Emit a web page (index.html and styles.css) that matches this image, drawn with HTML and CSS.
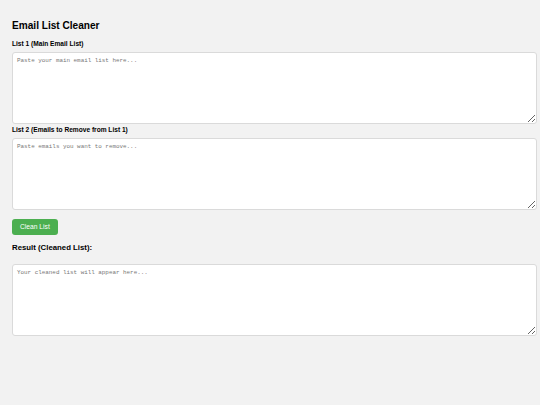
FILE: index.html
```html
<!DOCTYPE html>
<html lang="en">
<head>
<meta charset="utf-8">
<title>Email List Cleaner</title>
<link rel="stylesheet" href="styles.css">
</head>
<body>
<main class="page">
  <h1 class="title">Email List Cleaner</h1>
  <label class="field-label" for="list1">List 1 (Main Email List)</label>
  <textarea id="list1" class="box" placeholder="Paste your main email list here..."></textarea>
  <label class="field-label" for="list2">List 2 (Emails to Remove from List 1)</label>
  <textarea id="list2" class="box" placeholder="Paste emails you want to remove..."></textarea>
  <button class="btn" type="button">Clean List</button>
  <h3 class="result-title">Result (Cleaned List):</h3>
  <textarea id="result" class="box" placeholder="Your cleaned list will appear here..." readonly></textarea>
</main>
</body>
</html>
```

FILE: styles.css
```css
html, body {
  margin: 0;
  padding: 0;
  background: #f2f2f2;
}

body {
  font-family: "Liberation Sans", Arial, Helvetica, sans-serif;
  color: #000;
}

.page {
  display: flex;
  flex-direction: column;
  align-items: flex-start;
  padding: 20px 3px 0 12px;
}

.title {
  margin: 0 0 8px 0;
  font-size: 10.1px;
  line-height: 12px;
  font-weight: bold;
}

.field-label {
  display: block;
  font-size: 6.6px;
  line-height: 8px;
  font-weight: bold;
  margin: 0 0 4px 0;
}

.box {
  display: block;
  width: 100%;
  height: 72px;
  box-sizing: border-box;
  margin: 0 0 2px 0;
  padding: 4px;
  border: 1px solid #dadada;
  border-radius: 3px;
  background: #fff;
  font-family: "Liberation Mono", "DejaVu Sans Mono", monospace;
  font-size: 5.9px;
  color: #333;
}

.box::placeholder {
  color: #777;
}

.btn {
  margin: 7px 0 0 0;
  height: 16px;
  padding: 0 8px;
  border: none;
  border-radius: 3px;
  background: #4caf50;
  color: #fff;
  font-family: "Liberation Sans", Arial, Helvetica, sans-serif;
  font-size: 6.7px;
  line-height: 16px;
  cursor: pointer;
}

.result-title {
  margin: 8px 0 11px 0;
  font-size: 7.8px;
  line-height: 10px;
  font-weight: bold;
}
```
